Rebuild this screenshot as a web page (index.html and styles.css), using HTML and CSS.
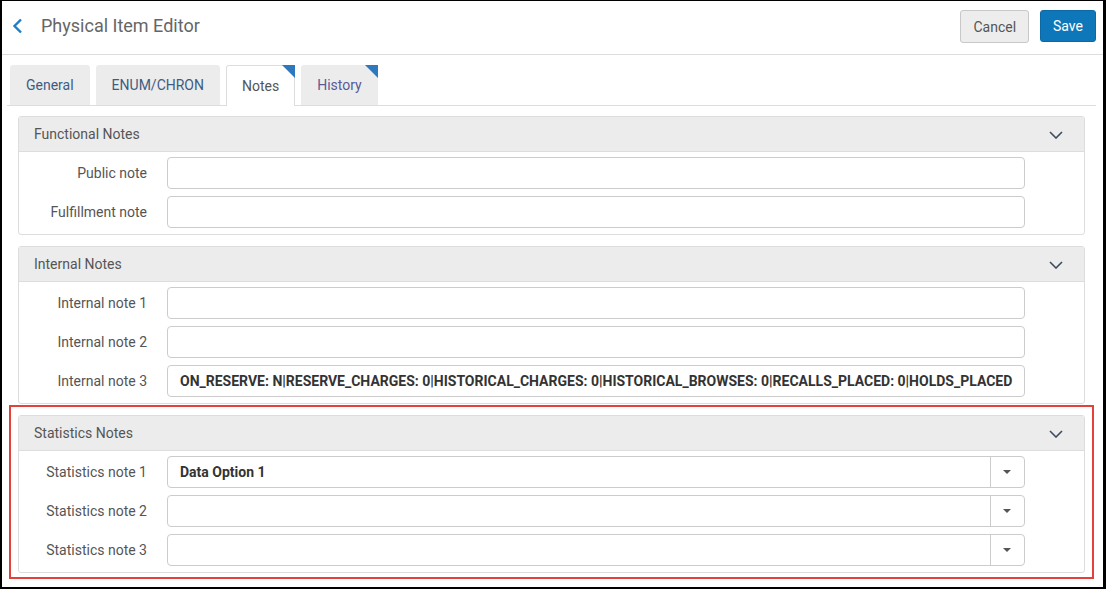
FILE: index.html
```html
<!DOCTYPE html>
<html lang="en">
<head>
    <meta charset="UTF-8">
    <title>Physical Item Editor</title>
    <link rel="stylesheet" href="styles.css">
</head>
<body>
<div class="frame">
    <header class="topbar">
        <a class="back" href="#">
            <svg width="12" height="16" viewBox="0 0 12 16"><path d="M9 1.5 L2.5 8 L9 14.5" fill="none" stroke="#1f7dc5" stroke-width="2.4"/></svg>
        </a>
        <h1 class="title">Physical Item Editor</h1>
        <div class="actions">
            <button class="btn btn-cancel">Cancel</button>
            <button class="btn btn-save">Save</button>
        </div>
    </header>

    <nav class="tabs">
        <a class="tab" href="#general">General</a>
        <a class="tab" href="#enum">ENUM/CHRON</a>
        <a class="tab active flagged" href="#notes">Notes</a>
        <a class="tab visited flagged" href="#history">History</a>
    </nav>

    <main class="content">
        <section class="panel">
            <div class="panel-head">
                <span>Functional Notes</span>
                <svg class="chev" width="14" height="8" viewBox="0 0 14 8"><path d="M1 1 L7 7 L13 1" fill="none" stroke="#3b4b60" stroke-width="1.6"/></svg>
            </div>
            <div class="panel-body">
                <label class="lbl">Public note</label>
                <div class="field"></div>
                <label class="lbl">Fulfillment note</label>
                <div class="field"></div>
            </div>
        </section>

        <section class="panel">
            <div class="panel-head">
                <span>Internal Notes</span>
                <svg class="chev" width="14" height="8" viewBox="0 0 14 8"><path d="M1 1 L7 7 L13 1" fill="none" stroke="#3b4b60" stroke-width="1.6"/></svg>
            </div>
            <div class="panel-body">
                <label class="lbl">Internal note 1</label>
                <div class="field"></div>
                <label class="lbl">Internal note 2</label>
                <div class="field"></div>
                <label class="lbl">Internal note 3</label>
                <div class="field">ON_RESERVE: N|RESERVE_CHARGES: 0|HISTORICAL_CHARGES: 0|HISTORICAL_BROWSES: 0|RECALLS_PLACED: 0|HOLDS_PLACED</div>
            </div>
        </section>

        <section class="panel highlighted">
            <div class="panel-head">
                <span>Statistics Notes</span>
                <svg class="chev" width="14" height="8" viewBox="0 0 14 8"><path d="M1 1 L7 7 L13 1" fill="none" stroke="#3b4b60" stroke-width="1.6"/></svg>
            </div>
            <div class="panel-body">
                <label class="lbl">Statistics note 1</label>
                <div class="field select"><span class="val">Data Option 1</span><span class="caret"></span></div>
                <label class="lbl">Statistics note 2</label>
                <div class="field select"><span class="val"></span><span class="caret"></span></div>
                <label class="lbl">Statistics note 3</label>
                <div class="field select"><span class="val"></span><span class="caret"></span></div>
            </div>
        </section>
    </main>
</div>
</body>
</html>
```

FILE: styles.css
```css
* {
  box-sizing: border-box;
}

body {
  margin: 0;
  font-family: Roboto, "Liberation Sans", Arial, sans-serif;
  background: #fff;
}

.frame {
  width: 1106px;
  height: 589px;
  border: 2px solid #000;
  border-top-width: 1px;
  border-right-width: 3px;
  overflow: hidden;
}

.topbar {
  height: 54px;
  display: flex;
  align-items: flex-start;
  padding: 9px 7px 0 10px;
  border-bottom: 1px solid #ddd;
}

.back {
  display: flex;
  align-items: center;
  height: 32px;
  width: 29px;
}

.title {
  margin: 0;
  font-size: 18px;
  font-weight: normal;
  line-height: 32px;
  color: #666;
}

.actions {
  margin-left: auto;
  display: flex;
  gap: 11px;
}

.btn {
  font-family: inherit;
  font-size: 14px;
  height: 33px;
  border-radius: 3px;
  padding: 0 12px;
}

.btn-cancel {
  background: #ededed;
  border: 1px solid #c8c8c8;
  color: #555;
}

.btn-save {
  background: #0e77b9;
  border: 1px solid #0b6aa6;
  color: #fff;
  height: 32px;
}

.tabs {
  display: flex;
  align-items: flex-end;
  margin: 10px 7px 0 5px;
  padding-left: 3px;
  border-bottom: 1px solid #ddd;
  height: 41px;
}

.tab {
  position: relative;
  height: 40px;
  display: flex;
  align-items: center;
  padding: 0 16px;
  margin-right: 6px;
  background: #ececec;
  border-radius: 3px 3px 0 0;
  text-decoration: none;
  font-size: 14px;
  color: #3e5c82;
}

.tab.active {
  background: #fff;
  border: 1px solid #ddd;
  border-bottom: none;
  height: 41px;
  margin-bottom: -1px;
  padding: 0 15px;
  color: #555;
}

.tab.visited {
  color: #5a5a98;
}

.flagged::after {
  content: "";
  position: absolute;
  top: 0;
  right: 0;
  border-top: 13px solid #2e78bd;
  border-left: 13px solid transparent;
}

.tab.active.flagged::after {
  top: -1px;
  right: -1px;
}

.content {
  padding: 10px 18px 0 16px;
  display: flex;
  flex-direction: column;
  gap: 11px;
}

.panel {
  position: relative;
  border: 1px solid #ddd;
  border-radius: 3px;
}

.panel-head {
  height: 35px;
  display: flex;
  align-items: center;
  justify-content: space-between;
  padding: 0 21px 0 15px;
  background: #ececec;
  border-bottom: 1px solid #ddd;
  font-size: 14px;
  color: #555;
}

.chev {
  margin-top: 2px;
}

.panel-body {
  display: grid;
  grid-template-columns: 128px 1fr;
  column-gap: 20px;
  row-gap: 7px;
  padding: 5px 59px 6px 0;
}

.lbl {
  text-align: right;
  align-self: center;
  font-size: 14px;
  color: #555;
}

.field {
  height: 32px;
  border: 1px solid #ccc;
  border-radius: 4px;
  padding: 0 12px;
  display: flex;
  align-items: center;
  font-size: 14px;
  font-weight: bold;
  color: #333;
  white-space: nowrap;
  overflow: hidden;
}

.field.select {
  padding: 0 0 0 12px;
}

.val {
  flex: 1;
}

.caret {
  width: 34px;
  height: 100%;
  border-left: 1px solid #ccc;
  position: relative;
}

.caret::after {
  content: "";
  position: absolute;
  left: 12px;
  top: 13px;
  border-top: 4px solid #555;
  border-left: 4px solid transparent;
  border-right: 4px solid transparent;
}

.highlighted::after {
  content: "";
  position: absolute;
  top: -11px;
  left: -10px;
  right: -10px;
  bottom: -7px;
  border: 2px solid #e4403c;
}
```
